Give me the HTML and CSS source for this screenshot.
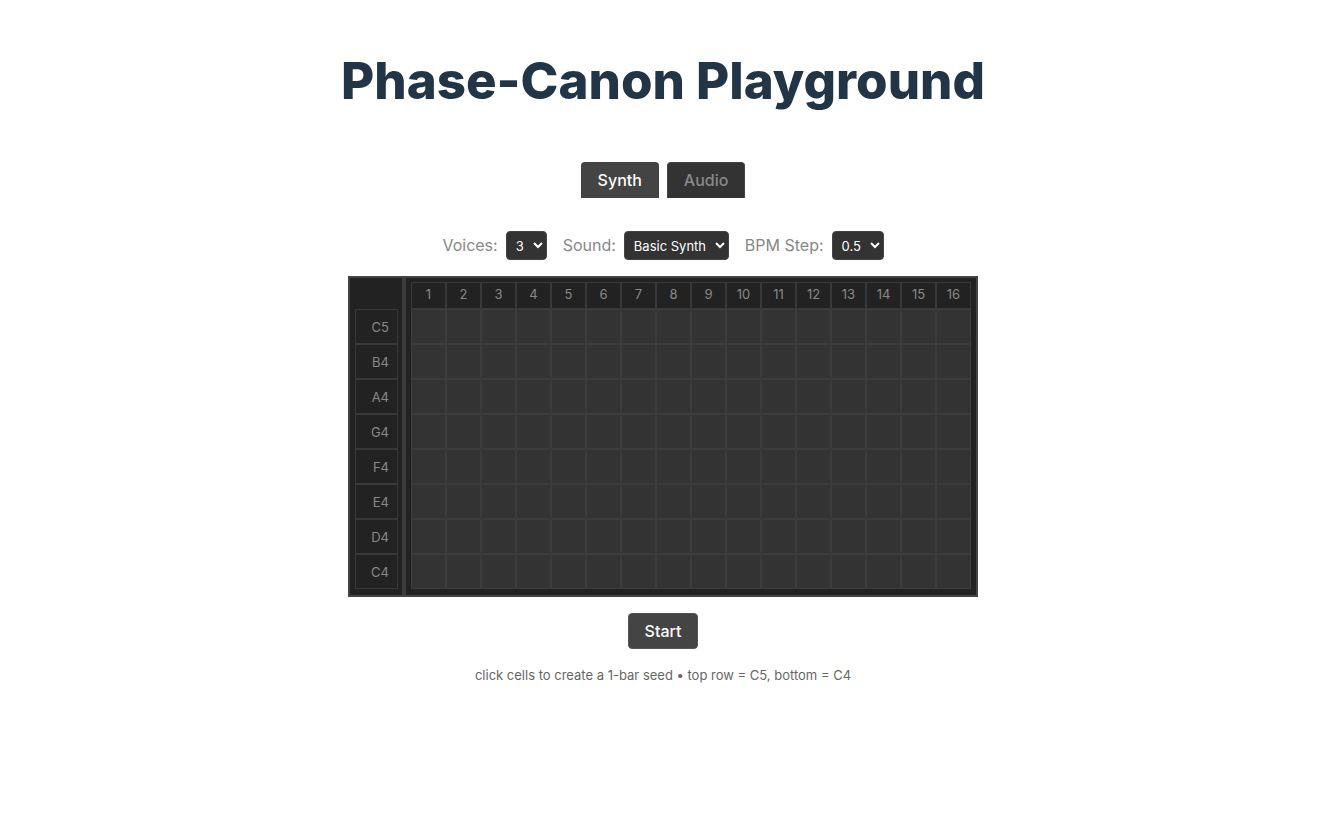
FILE: index.html
```
<!DOCTYPE html>
<html lang="en">
<head>
<meta charset="utf-8">
<meta name="viewport" content="width=device-width, initial-scale=1">
<title>Phase-Canon Playground</title>
<link rel="stylesheet" href="styles.css">
</head>
<body>
<main class="app">
  <h1 class="title">Phase-Canon Playground</h1>

  <nav class="tabs">
    <button class="tab tab-active" type="button">Synth</button>
    <button class="tab" type="button">Audio</button>
  </nav>

  <div class="controls">
    <div class="field">
      <label for="voices">Voices:</label>
      <select id="voices"><option>2</option><option selected>3</option><option>4</option></select>
    </div>
    <div class="field">
      <label for="sound">Sound:</label>
      <select id="sound"><option>Basic Synth</option></select>
    </div>
    <div class="field">
      <label for="bpm">BPM Step:</label>
      <select id="bpm"><option>0.5</option></select>
    </div>
  </div>

  <section class="sequencer">
    <div class="notes" id="notes"></div>
    <div class="steps" id="steps"></div>
  </section>

  <button class="start" type="button">Start</button>
  <p class="hint">click cells to create a 1-bar seed • top row = C5, bottom = C4</p>
</main>
<script src="script.js"></script>
</body>
</html>
```
FILE: styles.css
```
* {
  box-sizing: border-box;
}

body {
  margin: 0;
  background: #fff;
  color: #888;
  font-family: Inter, "Liberation Sans", sans-serif;
  font-size: 16px;
  line-height: 24px;
}

button,
select {
  font-family: inherit;
}

.app {
  display: flex;
  flex-direction: column;
  align-items: center;
  padding: 32px;
}

.title {
  margin: 16px 0 48px;
  color: #213547;
  font-size: 51px;
  font-weight: 800;
  line-height: 66px;
}

.tabs {
  display: flex;
  gap: 8px;
  margin-bottom: 32px;
}

.tab {
  padding: 5px 16px 6px;
  border: 1px solid #444;
  border-bottom: 0;
  border-radius: 4px 4px 0 0;
  background: #333;
  color: #888;
  font-size: 16px;
  font-weight: 500;
  line-height: 24px;
}

.tab-active {
  background: #444;
  color: #fff;
}

.controls {
  display: flex;
  gap: 16px;
  margin-bottom: 16px;
  padding-top: 1px;
}

.field {
  display: flex;
  align-items: flex-start;
  gap: 8px;
}

.field label {
  line-height: 28px;
}

.field select {
  height: 29px;
  padding: 4px 5px;
  border: 1px solid #444;
  border-radius: 4px;
  background: #333;
  color: #fff;
  font-size: 13px;
}

.sequencer {
  display: flex;
  border: 2px solid #444;
  background: #222;
}

.notes {
  padding: 31px 4px 6px 5px;
  border-right: 4px solid #3c3c3c;
}

.note {
  display: flex;
  align-items: center;
  justify-content: flex-end;
  width: 43px;
  height: 35px;
  padding-right: 8px;
  border: 1px solid #383838;
  background: #222;
  font-size: 13px;
}

.steps {
  display: grid;
  grid-template-columns: repeat(16, 35px);
  grid-template-rows: 27px;
  grid-auto-rows: 35px;
  padding: 4px 5px 6px;
}

.step {
  border: 1px solid #383838;
  font-size: 13px;
  line-height: 22px;
  text-align: center;
}

.cell {
  padding: 0;
  border: 1px solid #3c3c3c;
  background: #333;
}

.cell[aria-pressed="true"] {
  background: #4caf50;
}

.start {
  margin-top: 16px;
  padding: 5px 16px;
  border: 1px solid #555;
  border-radius: 4px;
  background: #444;
  color: #fff;
  font-size: 16px;
  font-weight: 500;
  line-height: 24px;
}

.hint {
  margin: 16px 0 0;
  color: #666;
  font-size: 13px;
  line-height: 20px;
}
```
FILE: script.js
```
const pitches = ["C5", "B4", "A4", "G4", "F4", "E4", "D4", "C4"];
const notes = document.getElementById("notes");
const steps = document.getElementById("steps");

for (let i = 1; i <= 16; i++) {
  const head = document.createElement("div");
  head.className = "step";
  head.textContent = i;
  steps.append(head);
}

for (const pitch of pitches) {
  const note = document.createElement("div");
  note.className = "note";
  note.textContent = pitch;
  notes.append(note);

  for (let i = 1; i <= 16; i++) {
    const cell = document.createElement("button");
    cell.type = "button";
    cell.className = "cell";
    cell.setAttribute("aria-label", pitch + " step " + i);
    cell.setAttribute("aria-pressed", "false");
    cell.addEventListener("click", () => {
      cell.setAttribute("aria-pressed", String(cell.getAttribute("aria-pressed") !== "true"));
    });
    steps.append(cell);
  }
}
```
